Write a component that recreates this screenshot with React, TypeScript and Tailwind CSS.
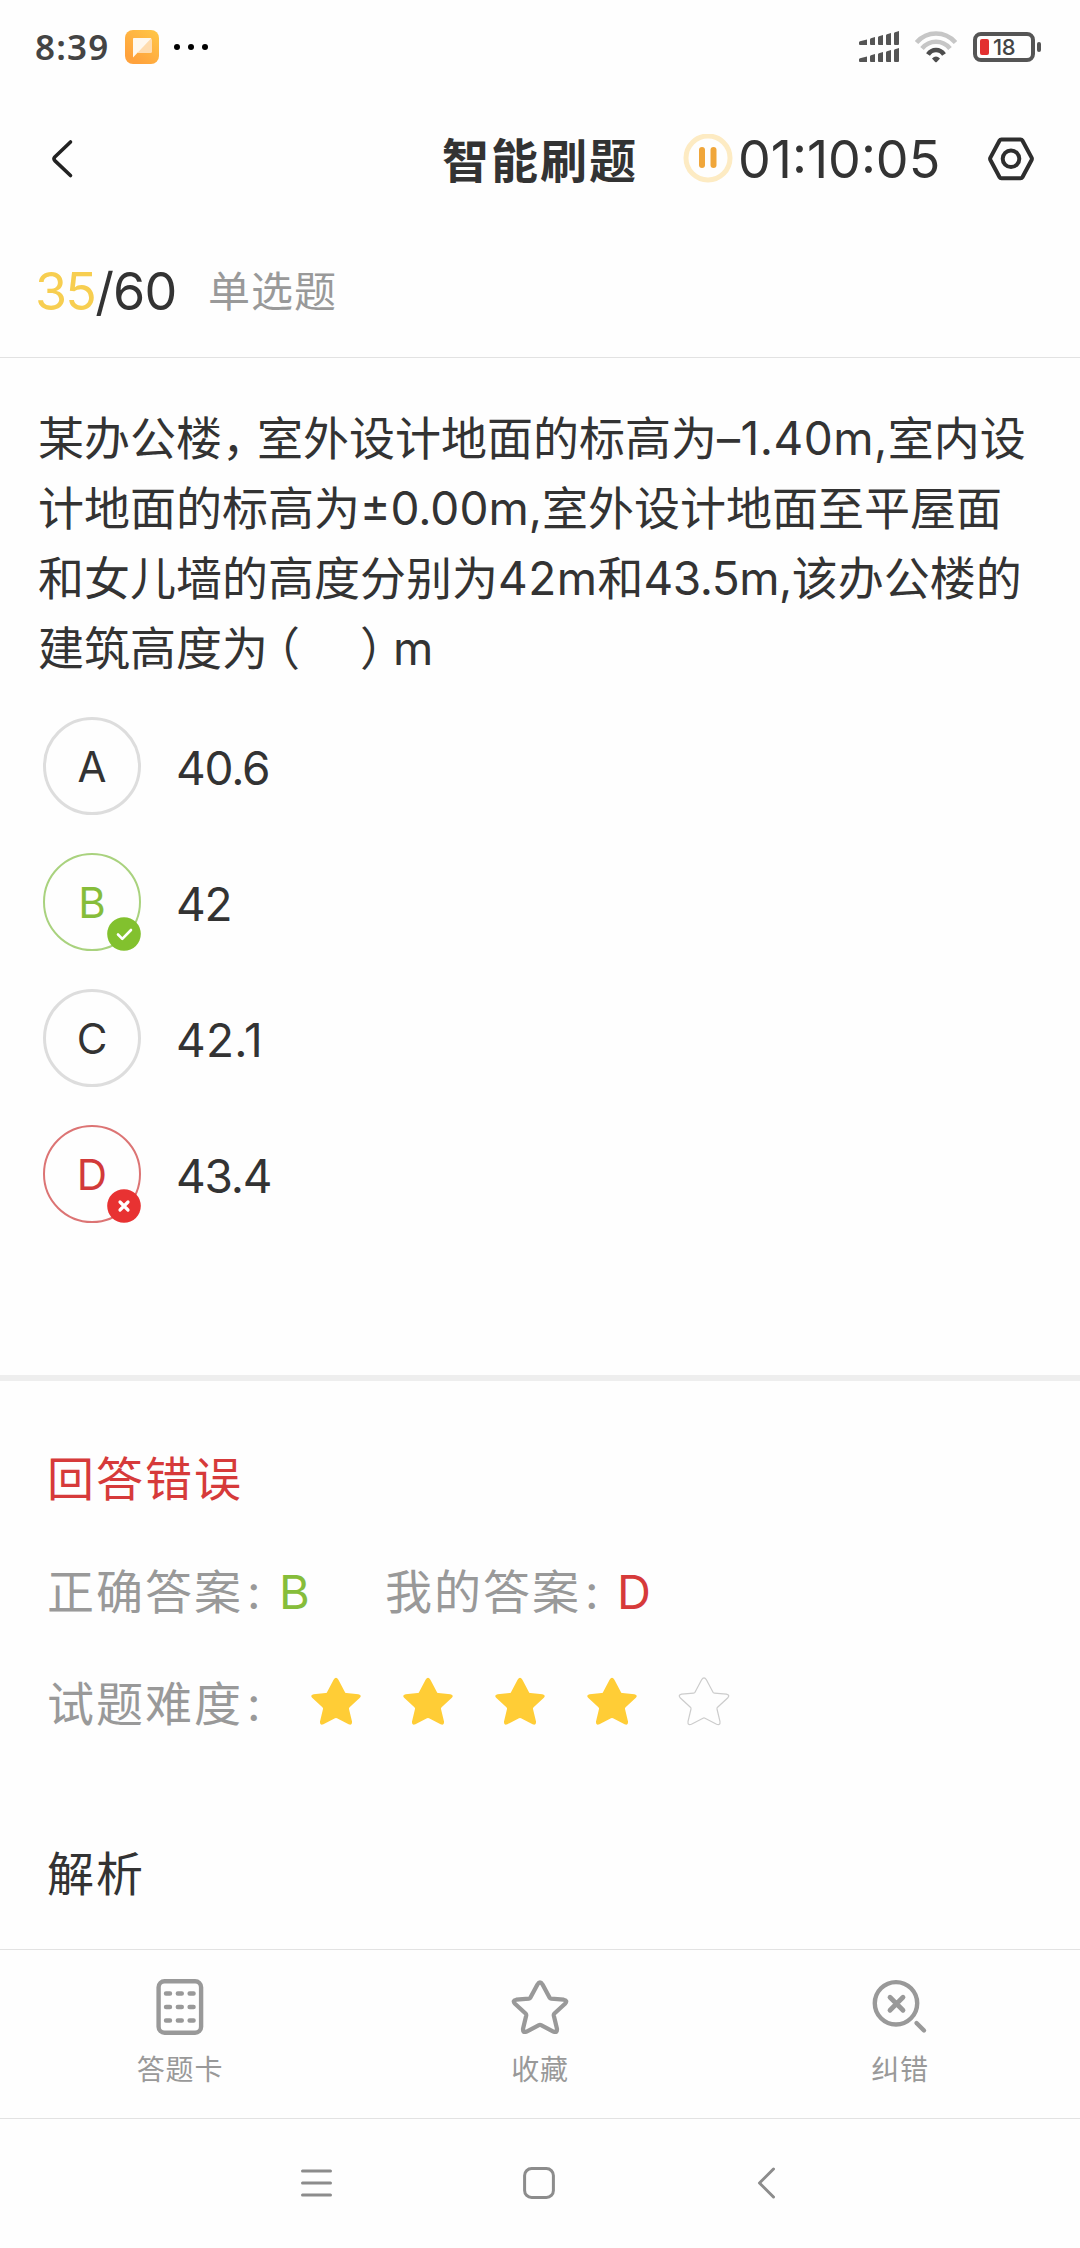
import type { ReactNode } from "react";

type Status = "idle" | "right" | "wrong";

const options: { key: string; text: string; status: Status }[] = [
  { key: "A", text: "40.6", status: "idle" },
  { key: "B", text: "42", status: "right" },
  { key: "C", text: "42.1", status: "idle" },
  { key: "D", text: "43.4", status: "wrong" },
];

const STAR =
  "M22.6 2.8 Q25 -1.2 27.4 2.8 L34 15.2 Q34.4 16 35.4 16.1 L47.4 17.2 Q51.4 18 48.6 21 L38.6 30.2 Q37.8 31 38 32 L41 44.6 Q41.4 48.8 37.6 47.2 L26 41.2 Q25 40.7 24 41.2 L12.4 47.2 Q8.6 48.8 9 44.6 L12 32 Q12.2 31 11.4 30.2 L1.4 21 Q-1.4 18 2.6 17.2 L14.6 16.1 Q15.6 16 16 15.2 Z";

const StatusBar = () => (
  <div className="h-[94px] flex items-center pl-[35px] pr-[39px]">
    <span className="w-[90px] pb-0.5 font-['Noto_Sans'] font-semibold text-[35px] leading-none tracking-[1.2px] text-[#444]">
      8:39
    </span>
    <svg width="34" height="34" viewBox="0 0 34 34">
      <defs>
        <linearGradient id="app" x1="1" y1="0" x2="0.3" y2="0.9">
          <stop offset="0" stopColor="#ffc848" />
          <stop offset="1" stopColor="#ffa23c" />
        </linearGradient>
      </defs>
      <rect width="34" height="34" rx="8" fill="url(#app)" />
      <path d="M8 8.5h17.5a1.5 1.5 0 0 1 1.5 1.5v11.5a1.5 1.5 0 0 1-1.5 1.5H13z" fill="#ffdcae" />
      <path d="M9 8h17.5L8 27.5V9a1 1 0 0 1 1-1z" fill="#fff8ee" />
    </svg>
    <div className="flex gap-2 ml-[15px]">
      <i className="size-[6px] rounded-full bg-black" />
      <i className="size-[6px] rounded-full bg-black" />
      <i className="size-[6px] rounded-full bg-black" />
    </div>

    {/* Signal, wifi, battery */}
    <svg className="ml-auto" width="40" height="32" viewBox="0 0 40 32" fill="#555">
      {[0, 17].map((y) => (
        <g key={y} transform={`translate(0 ${y})`}>
          <path d="M0 11.5 Q0 10.5 1 10.3 L8 8.5 V14 H1 Q0 14 0 13z" />
          <path d="M11 8.5 Q11 7.5 12 7.2 L16 6 V14 H12 Q11 14 11 13z" />
          <path d="M19 6.5 Q19 5.5 20 5.2 L24 4 V14 H20 Q19 14 19 13z" />
          <path d="M27 4.5 Q27 3.5 28 3.2 L32 2 V14 H28 Q27 14 27 13z" />
          <path d="M35 2.5 Q35 1.5 36 1.2 L40 0 V13 Q40 14 39 14 H36 Q35 14 35 13z" />
        </g>
      ))}
    </svg>
    <svg className="ml-[16px]" width="42" height="32" viewBox="0 0 42 32" fill="none" strokeWidth="4.6">
      <path d="M1.5 11.5 C12 -0.5 30 -0.5 40.5 11.5" stroke="#c6c6c6" />
      <path d="M7 17.5 C14.5 8.5 27.5 8.5 35 17.5" stroke="#c6c6c6" />
      <path d="M13 23.5 C17 17.5 25 17.5 29 23.5" stroke="#4d4d4d" />
      <path d="M17 27.5 Q21 23.5 25 27.5 L21.8 31 Q21 31.6 20.2 31z" fill="#4d4d4d" />
    </svg>
    <div className="ml-[16px] w-[62px] h-[30px] border-4 border-[#555] rounded-[8px] flex items-center pl-[3px]">
      <i className="w-[9px] h-4 rounded-[2px] bg-[#e33030]" />
      <span className="ml-1 font-['Inter'] font-medium text-[22px] leading-none tracking-[-0.5px] text-[#444]">18</span>
    </div>
    <i className="ml-0.5 w-1 h-[10px] rounded-[2px] bg-[#555]" />
  </div>
);

const Header = () => (
  <div className="h-[130px] flex items-center pl-[50px] pr-[45px]">
    <svg width="24" height="42" viewBox="0 0 24 42" fill="none" stroke="#222" strokeWidth="3.6" strokeLinecap="round" strokeLinejoin="round">
      <path d="M20.5 4 L4.8 19 Q3.2 20.8 4.8 22.6 L20.5 37.5" />
    </svg>
    <h1 className="ml-[368px] w-[241px] pt-[3px] text-[47px] leading-[60px] font-bold tracking-[2px] whitespace-nowrap">
      智能刷题
    </h1>
    <svg width="50" height="50" viewBox="0 0 50 50">
      <circle cx="25" cy="24" r="22" fill="none" stroke="#fdebc3" strokeWidth="5" />
      <rect x="16" y="13" width="6" height="21" rx="3" fill="#f0a63a" />
      <rect x="27.5" y="13" width="6" height="21" rx="3" fill="#f0a63a" />
    </svg>
    <span className="ml-[5px] pt-0.5 text-[52px] leading-[60px] whitespace-nowrap">01:10:05</span>
    <svg className="ml-auto" width="48" height="46" viewBox="0 0 48 46" fill="none" stroke="#2e2e2e" strokeWidth="4" strokeLinejoin="round">
      <path d="M14.5 3.4 H33.5 Q34.8 3.4 35.4 4.5 L44.6 21.6 Q45.2 22.8 44.6 24 L35.4 41.2 Q34.8 42.3 33.5 42.3 H14.5 Q13.2 42.3 12.6 41.2 L3.4 24 Q2.8 22.8 3.4 21.6 L12.6 4.5 Q13.2 3.4 14.5 3.4z" />
      <circle cx="24" cy="22.8" r="8.3" />
    </svg>
  </div>
);

const Question = () => (
  <div className="pt-[45px] pl-[38px] text-[46px] leading-[70px] whitespace-nowrap">
    <p>
      某办公楼<span className="tracking-[-11px]">，</span>室外设计地面的标高为
      <span className="tracking-[0.5px]">–1.40m,</span>室内设
    </p>
    <p>计地面的标高为±0.00m,室外设计地面至平屋面</p>
    <p>
      和女儿墙的高度分别为<span className="tracking-[0.5px]">42m</span>和
      <span className="tracking-[-0.5px]">43.5m,</span>该办公楼的
    </p>
    <p>
      建筑高度<span className="tracking-[-14px]">为</span>（
      <span className="ml-[60px] tracking-[-13px]">）</span>m
    </p>
  </div>
);

const OptionMark = ({ letter, status }: { letter: string; status: Status }) => {
  const ring = {
    idle: "border-[3px] border-[#ddd]",
    right: "border-2 border-[#a9d27e] text-[#86bd3a]",
    wrong: "border-2 border-[#dc7474] text-[#d23a3a]",
  }[status];

  return (
    <div className={`relative size-[98px] rounded-full flex items-center justify-center pt-0.5 text-[42px] leading-none ${ring}`}>
      {letter}
      {status !== "idle" && (
        <svg className="absolute -right-[2px] -bottom-[2px]" width="34" height="34" viewBox="0 0 34 34" fill="none" stroke="#fff" strokeLinecap="round" strokeLinejoin="round">
          <circle cx="17" cy="17" r="16.8" fill={status === "right" ? "#82c12e" : "#e83232"} stroke="none" />
          {status === "right" ? (
            <path d="M11 17.5 L15.3 21.8 L24 13" strokeWidth="2.6" />
          ) : (
            <path d="M13 13 L21 21 M21 13 L13 21" strokeWidth="3.2" />
          )}
        </svg>
      )}
    </div>
  );
};

const Star = ({ filled }: { filled: boolean }) => (
  <svg width="52" height="50" viewBox="-1 -1 52 50">
    <path d={STAR} fill={filled ? "#ffcd36" : "none"} stroke={filled ? "none" : "#ccc"} strokeWidth="1.2" />
  </svg>
);

const Label = ({ text }: { text: string }) => (
  <span className="w-[232px]">
    {text}
    <span className="ml-1">:</span>
  </span>
);

const Result = () => (
  <div className="pt-[64px] pl-[47px] text-[47px] leading-[68px] tracking-[2px] text-[#999] whitespace-nowrap">
    <p className="text-[#d63a3a]">回答错误</p>
    <div className="mt-[45px] flex">
      <Label text="正确答案" />
      <span className="w-[106px] text-[#86bd3a]">B</span>
      <Label text="我的答案" />
      <span className="text-[#d63a3a]">D</span>
    </div>
    <div className="mt-[44px] flex items-center">
      <Label text="试题难度" />
      <div className="ml-[31px] pb-[7px] flex gap-[40px]">
        {[1, 2, 3, 4, 5].map((n) => (
          <Star key={n} filled={n <= 4} />
        ))}
      </div>
    </div>
    <p className="mt-[102px] text-[#333]">解析</p>
  </div>
);

const Tab = ({ label, children }: { label: string; children: ReactNode }) => (
  <div className="flex-1 flex flex-col items-center pt-[27px] text-[#999]">
    <svg width="60" height="60" viewBox="0 0 60 60" fill="none" stroke="currentColor" strokeWidth="4.4" strokeLinecap="round" strokeLinejoin="round">
      {children}
    </svg>
    <span className="mt-[13px] text-[28px] leading-[40px] tracking-[0.8px]">{label}</span>
  </div>
);

const TabBar = () => (
  <div className="h-[170px] border-y border-[#e2e2e2] flex">
    <Tab label="答题卡">
      <rect x="8.6" y="4.2" width="42.5" height="51.6" rx="6" />
      {[16.5, 30, 43.5].map((y) => (
        <path key={y} d={`M16 ${y}h4M27.800 ${y}h4M39.600 ${y}h4`} />
      ))}
    </Tab>
    <Tab label="收藏">
      <path d={STAR} transform="translate(3.5 4.5) scale(1.06)" strokeWidth="4" />
    </Tab>
    <Tab label="纠错">
      <circle cx="26" cy="26.3" r="21.2" />
      <path d="M20 20.3 L33 33.3 M33 20.3 L20 33.3" strokeWidth="4.8" />
      <path d="M46.500 46 L54 53.500" />
    </Tab>
  </div>
);

const NavBar = () => (
  <div className="h-[129px] flex items-center pl-[300px] pb-0.5 text-[#8c8c8c]">
    <svg width="32" height="32" viewBox="0 0 32 32" stroke="currentColor" strokeWidth="3" strokeLinecap="round">
      <path d="M2.5 4H30.5M2.5 16H30.5M2.5 28H30.5" />
    </svg>
    <svg className="ml-[191px]" width="32" height="32" viewBox="0 0 32 32" fill="none" stroke="currentColor" strokeWidth="3">
      <rect x="1.6" y="1.6" width="28.8" height="28.8" rx="7" />
    </svg>
    <svg className="ml-[201px]" width="20" height="34" viewBox="0 0 20 34" fill="none" stroke="currentColor" strokeWidth="3" strokeLinecap="round" strokeLinejoin="round">
      <path d="M17.5 3 L3.500 17 L17.500 31" />
    </svg>
  </div>
);

export default function App() {
  return (
    <div
      lang="zh-CN"
      className="w-[1080px] h-[2248px] bg-[#fefefe] text-[#333] flex flex-col overflow-hidden font-['Inter','Noto_Sans_CJK_SC',sans-serif]"
    >
      <StatusBar />
      <Header />

      {/* Progress */}
      <div className="h-[134px] border-b border-[#e2e2e2] flex items-center pt-0.5 pl-[35px]">
        <span className="w-[173px] text-[52px] leading-[60px] tracking-[-0.8px]">
          <span className="text-[#f7ce50] tracking-[-1.8px]">35</span>/60
        </span>
        <span className="text-[42px] leading-[60px] tracking-[1px] text-[#999]">单选题</span>
      </div>

      <Question />
      <div className="mt-[34px] pl-[43px] flex flex-col gap-[38px]">
        {options.map((o) => (
          <div key={o.key} className="flex items-center gap-[35px]">
            <OptionMark letter={o.key} status={o.status} />
            <span
              className={`pt-[3px] text-[46px] leading-none ${o.text.endsWith("1") ? "tracking-[0.3px]" : "tracking-[-1.2px]"}`}
            >
              {o.text}
            </span>
          </div>
        ))}
      </div>

      <div className="mt-[152px] h-[6px] bg-[#eee] shrink-0" />
      <Result />

      <div className="mt-auto">
        <TabBar />
        <NavBar />
      </div>
    </div>
  );
}
